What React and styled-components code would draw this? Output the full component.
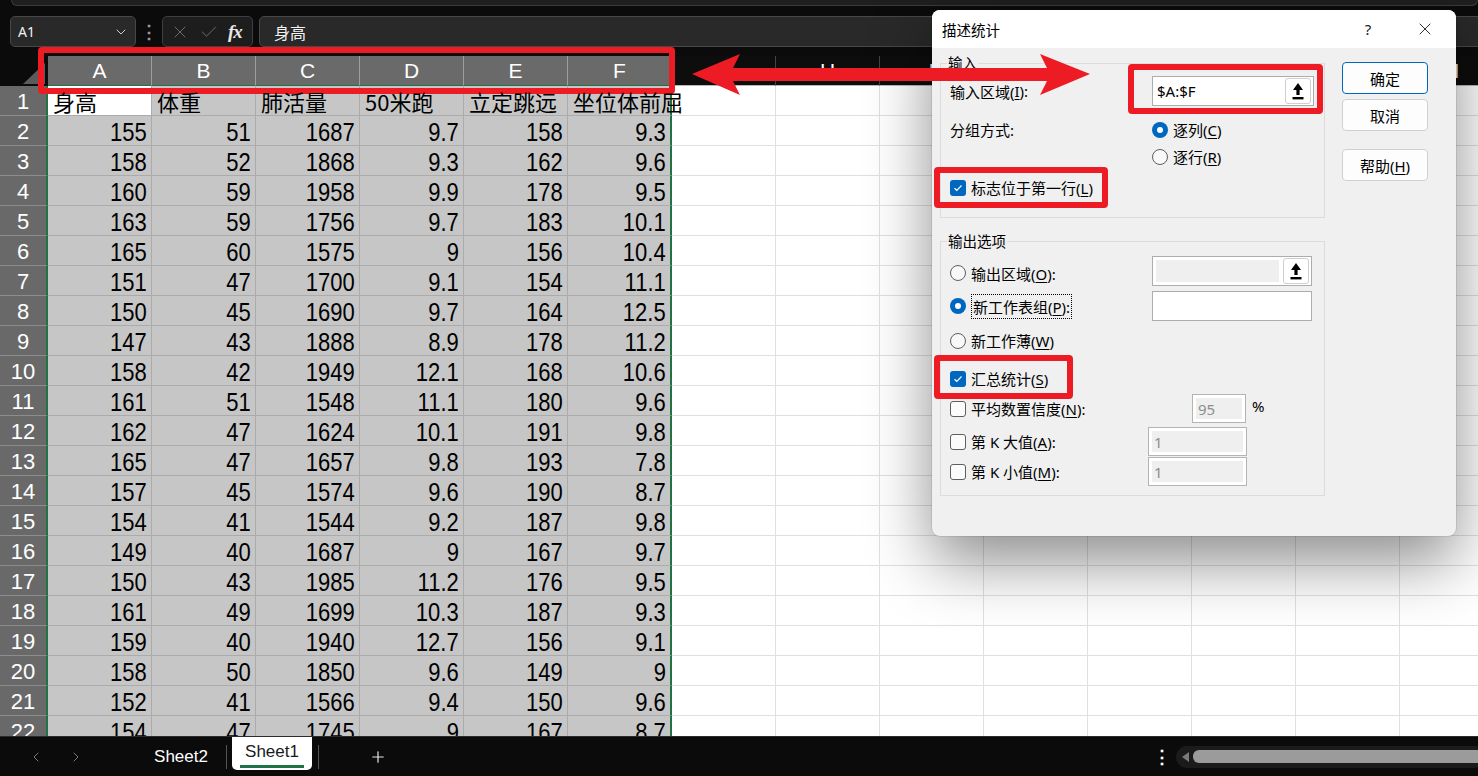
import styled, { createGlobalStyle } from 'styled-components';
import { ChevronDown, ChevronLeft, ChevronRight, X, Check, Plus } from 'lucide-react';

const GlobalStyle = createGlobalStyle`
  html, body { margin: 0; padding: 0; background: #0b0b0b; }
  body { overflow: hidden; }
  * { box-sizing: border-box; }
`;

const HEADERS = ['身高', '体重', '肺活量', '50米跑', '立定跳远', '坐位体前屈'];
const DATA = [
  [155, 51, 1687, 9.7, 158, 9.3],
  [158, 52, 1868, 9.3, 162, 9.6],
  [160, 59, 1958, 9.9, 178, 9.5],
  [163, 59, 1756, 9.7, 183, 10.1],
  [165, 60, 1575, 9, 156, 10.4],
  [151, 47, 1700, 9.1, 154, 11.1],
  [150, 45, 1690, 9.7, 164, 12.5],
  [147, 43, 1888, 8.9, 178, 11.2],
  [158, 42, 1949, 12.1, 168, 10.6],
  [161, 51, 1548, 11.1, 180, 9.6],
  [162, 47, 1624, 10.1, 191, 9.8],
  [165, 47, 1657, 9.8, 193, 7.8],
  [157, 45, 1574, 9.6, 190, 8.7],
  [154, 41, 1544, 9.2, 187, 9.8],
  [149, 40, 1687, 9, 167, 9.7],
  [150, 43, 1985, 11.2, 176, 9.5],
  [161, 49, 1699, 10.3, 187, 9.3],
  [159, 40, 1940, 12.7, 156, 9.1],
  [158, 50, 1850, 9.6, 149, 9],
  [152, 41, 1566, 9.4, 150, 9.6],
  [154, 47, 1745, 9, 167, 8.7],
];
const LETTERS = 'ABCDEFGHIJKLMN'.split('');

function App() {
  return (
    <Screen>
      <GlobalStyle />
      <RibbonEdge />
      <FormulaBar>
        <NameBox>
          <span>A1</span>
          <ChevronDown size={16} strokeWidth={1.5} color="#cfcfcf" />
        </NameBox>
        <BarDots>⋮</BarDots>
        <FxBox>
          <X size={20} strokeWidth={1.2} color="#6c6c6c" />
          <Check size={20} strokeWidth={1.2} color="#6c6c6c" />
          <FxGlyph>fx</FxGlyph>
        </FxBox>
        <FormulaInput>身高</FormulaInput>
      </FormulaBar>

      <Sheet>
        <Corner>
          <svg width="24" height="22" viewBox="0 0 24 22">
            <polygon points="24,0 24,21 2,21" fill="#5b5b5b" />
          </svg>
        </Corner>
        {LETTERS.map((l, i) => (
          <ColHead key={l} $selected={i < 6}>{l}</ColHead>
        ))}

        <RowHead>1</RowHead>
        {LETTERS.map((l, i) => (
          <Cell key={l} $selected={i < 6} $active={i === 0} $edge={i === 5} $align="left">
            {i < 6 && <CjkText $over={i === 5}>{HEADERS[i]}</CjkText>}
          </Cell>
        ))}

        {DATA.map((row, r) => (
          <RowGroup key={r} row={row} n={r + 2} />
        ))}
      </Sheet>

      <BottomBar>
        <NavArrow><ChevronLeft size={16} strokeWidth={1.3} /></NavArrow>
        <NavArrow $gap><ChevronRight size={16} strokeWidth={1.3} /></NavArrow>
        <SheetTab $ml={57}>Sheet2</SheetTab>
        <TabSep $ml={5} />
        <SheetTab $ml={5} $active>Sheet1</SheetTab>
        <TabSep $ml={6} />
        <AddSheet><Plus size={18} strokeWidth={1.6} /></AddSheet>
        <Spacer />
        <BarMenu>⋮</BarMenu>
        <HScroll>
          <ScrollArrow />
          <ScrollThumb />
        </HScroll>
      </BottomBar>

      <Dialog>
        <TitleBar>
          <TitleText>描述统计</TitleText>
          <TitleHelp>?</TitleHelp>
          <TitleClose><X size={20} strokeWidth={1.1} color="#1a1a1a" /></TitleClose>
        </TitleBar>
        <DialogBody>
          <Groups>
            <Group>
              <Legend>输入</Legend>
              <FormRow $mt={5} $h={30}>
                <FieldLabel $w={202}>输入区域(<u>I</u>):</FieldLabel>
                <RangeField $w={162}>
                  <RangeText>$A:$F</RangeText>
                  <PickButton><PickIcon /></PickButton>
                </RangeField>
              </FormRow>
              <FormRow $mt={10} $align="flex-start">
                <FieldLabel $w={202} $h={27}>分组方式:</FieldLabel>
                <ChoiceStack>
                  <Choice $h={27}><Radio $checked /><span>逐列(<u>C</u>)</span></Choice>
                  <Choice $h={27}><Radio /><span>逐行(<u>R</u>)</span></Choice>
                </ChoiceStack>
              </FormRow>
              <FormRow $mt={4} $h={27}>
                <Choice><CheckBox $checked /><span>标志位于第一行(<u>L</u>)</span></Choice>
              </FormRow>
            </Group>

            <Group $mt={15} $pb={9}>
              <Legend>输出选项</Legend>
              <FormRow $mt={7} $h={30}>
                <Choice $w={202} $nudge={4}><Radio /><span>输出区域(<u>O</u>):</span></Choice>
                <RangeField $w={160} $inset>
                  <FieldFill />
                  <PickButton><PickIcon /></PickButton>
                </RangeField>
              </FormRow>
              <FormRow $mt={5} $h={30}>
                <Choice $w={202}><Radio $checked /><FocusText>新工作表组(<u>P</u>):</FocusText></Choice>
                <RangeField $w={160} />
              </FormRow>
              <FormRow $mt={6} $h={27}>
                <Choice><Radio /><span>新工作薄(<u>W</u>)</span></Choice>
              </FormRow>
              <FormRow $mt={11} $h={27}>
                <Choice><CheckBox $checked /><span>汇总统计(<u>S</u>)</span></Choice>
              </FormRow>
              <FormRow $mt={2} $h={29}>
                <Choice $w={242}><CheckBox /><span>平均数置信度(<u>N</u>):</span></Choice>
                <NumberField $w={54}><FieldFill>95</FieldFill></NumberField>
                <Percent>%</Percent>
              </FormRow>
              <FormRow $mt={4} $h={29}>
                <Choice $w={198}><CheckBox /><span>第 K 大值(<u>A</u>):</span></Choice>
                <NumberField $w={99}><FieldFill>1</FieldFill></NumberField>
              </FormRow>
              <FormRow $mt={1} $h={29}>
                <Choice $w={198}><CheckBox /><span>第 K 小值(<u>M</u>):</span></Choice>
                <NumberField $w={99}><FieldFill>1</FieldFill></NumberField>
              </FormRow>
            </Group>
          </Groups>

          <Buttons>
            <DlgButton $primary>确定</DlgButton>
            <DlgButton>取消</DlgButton>
            <DlgButton $mt={13}><span>帮助(<u>H</u>)</span></DlgButton>
          </Buttons>
        </DialogBody>
      </Dialog>

      <Marker $x={38} $y={47} $w={637} $h={47} />
      <Marker $x={1128} $y={64} $w={195} $h={50} />
      <Marker $x={934} $y={167} $w={174} $h={41} />
      <Marker $x={934} $y={355} $w={139} $h={44} />
      <ArrowSvg width="402" height="46" viewBox="690 52 402 46">
        <polygon
          fill="#ed1c24"
          points="692,74 740,54 733,68 1047,68 1040,54 1090,74 1040,95 1047,81 733,81 740,95"
        />
      </ArrowSvg>
    </Screen>
  );
}

function RowGroup({ row, n }) {
  return (
    <>
      <RowHead>{n}</RowHead>
      {LETTERS.map((l, i) => (
        <Cell key={l} $selected={i < 6} $edge={i === 5}>
          {i < 6 && <NumText>{row[i]}</NumText>}
        </Cell>
      ))}
    </>
  );
}

function Radio({ $checked }) {
  return <RadioDot $checked={$checked} />;
}

function CheckBox({ $checked }) {
  return (
    <CheckSquare $checked={$checked}>
      {$checked && (
        <svg width="10" height="8" viewBox="0 0 10 8">
          <polyline points="1.5,4.2 3.8,6.3 8.5,1.5" fill="none" stroke="#fff" strokeWidth="1.2" />
        </svg>
      )}
    </CheckSquare>
  );
}

function PickIcon() {
  return (
    <svg width="12" height="18" viewBox="0 0 12 18">
      <polygon points="6,1 11,8 7.6,8 7.6,13 4.4,13 4.4,8 1,8" fill="#000" />
      <rect x="0.5" y="15" width="11" height="2.4" fill="#000" />
    </svg>
  );
}

const Screen = styled.div`
  position: relative;
  width: 1478px;
  height: 776px;
  overflow: hidden;
  display: flex;
  flex-direction: column;
  background: #0b0b0b;
  font-family: "Liberation Sans", Arial, sans-serif;
`;

const RibbonEdge = styled.div`
  height: 6px;
  margin-left: 11px;
  background: #1f1f1f;
  border: 1px solid #3b3b3b;
  border-top: none;
  border-radius: 0 0 9px 9px;
`;

const FormulaBar = styled.div`
  display: flex;
  align-items: stretch;
  height: 31px;
  margin: 10px 0 9px 0;
  padding-left: 10px;
`;

const NameBox = styled.div`
  width: 126px;
  display: flex;
  align-items: center;
  justify-content: space-between;
  padding: 0 6px 0 7px;
  background: #292929;
  border: 1px solid #474747;
  border-radius: 5px;
  color: #f2f2f2;
  font-family: "Noto Sans", sans-serif;
  font-size: 14px;
`;

const BarDots = styled.div`
  width: 26px;
  display: flex;
  align-items: center;
  justify-content: center;
  color: #9a9a9a;
  font-size: 18px;
  font-weight: bold;
`;

const FxBox = styled.div`
  width: 91px;
  display: flex;
  align-items: center;
  gap: 9px;
  padding-left: 7px;
  background: #1d1d1d;
  border: 1px solid #3f3f3f;
  border-radius: 5px;
`;

const FxGlyph = styled.span`
  color: #e8e8e8;
  font-family: "Liberation Serif", "DejaVu Serif", serif;
  font-style: italic;
  font-size: 19px;
  font-weight: bold;
  letter-spacing: -1px;
`;

const FormulaInput = styled.div`
  flex: 1;
  margin-left: 6px;
  margin-right: -10px;
  display: flex;
  align-items: center;
  padding-left: 14px;
  background: #292929;
  border: 1px solid #474747;
  border-radius: 5px;
  color: #f2f2f2;
  font-family: "Noto Sans CJK SC", sans-serif;
  font-size: 16px;
`;

const Sheet = styled.div`
  flex: 1;
  overflow: hidden;
  display: grid;
  grid-template-columns: 48px repeat(14, 104px);
  grid-auto-rows: 30px;
  background: #fff;
`;

const Corner = styled.div`
  background: #0b0b0b;
  display: flex;
  align-items: flex-end;
  justify-content: flex-end;
  padding-right: 3px;
  border-bottom: 1px solid #0b0b0b;
`;

const ColHead = styled.div`
  display: flex;
  align-items: center;
  justify-content: center;
  font-size: 21px;
  color: #ffffff;
  background: ${p => (p.$selected ? '#6a6a6a' : '#0d0d0d')};
  border-right: 1px solid ${p => (p.$selected ? '#9d9d9d' : '#444')};
  border-bottom: 1px solid ${p => (p.$selected ? '#217346' : '#b8b8b8')};
`;

const RowHead = styled.div`
  display: flex;
  align-items: flex-end;
  justify-content: center;
  padding-bottom: 1px;
  line-height: 25px;
  font-size: 22px;
  color: #fff;
  background: #696969;
  border-bottom: 1px solid #8d8d8d;
  border-right: 2px solid #217346;
`;

const Cell = styled.div`
  display: flex;
  align-items: flex-end;
  justify-content: ${p => (p.$align === 'left' ? 'flex-start' : 'flex-end')};
  padding: 0 4px 0 5px;
  white-space: nowrap;
  color: #000;
  background: ${p => (p.$active ? '#ffffff' : p.$selected ? '#c6c6c6' : '#ffffff')};
  border-right: ${p => (p.$edge ? '2px solid #217346' : `1px solid ${p.$selected ? '#ababab' : '#e0e0e0'}`)};
  border-bottom: 1px solid ${p => (p.$selected ? '#ababab' : '#e0e0e0')};
`;

const CjkText = styled.span`
  position: ${p => (p.$over ? 'relative' : 'static')};
  z-index: 1;
  font-family: "Noto Sans CJK SC", sans-serif;
  font-size: 22px;
  line-height: 27px;
`;

const NumText = styled.span`
  display: inline-block;
  font-size: 25px;
  line-height: 25px;
  transform: scaleX(0.88);
  transform-origin: right bottom;
`;

const BottomBar = styled.div`
  height: 40px;
  flex-shrink: 0;
  display: flex;
  align-items: center;
  padding-left: 28px;
  background: #0b0b0b;
  border-top: 1px solid #2c2c2c;
  color: #fff;
`;

const NavArrow = styled.div`
  width: 16px;
  display: flex;
  justify-content: center;
  color: #8a8a8a;
  margin-left: ${p => (p.$gap ? '24px' : '0')};
`;

const SheetTab = styled.div`
  position: relative;
  width: 80px;
  margin-left: ${p => p.$ml}px;
  align-self: ${p => (p.$active ? 'flex-start' : 'center')};
  height: ${p => (p.$active ? '33px' : 'auto')};
  display: flex;
  align-items: center;
  justify-content: center;
  padding-bottom: ${p => (p.$active ? '4px' : '0')};
  background: ${p => (p.$active ? '#ffffff' : 'transparent')};
  color: ${p => (p.$active ? '#1a1a1a' : '#ffffff')};
  border-radius: 0 0 5px 5px;
  font-size: 17px;
  &::after {
    content: '';
    display: ${p => (p.$active ? 'block' : 'none')};
    position: absolute;
    left: 8px;
    right: 8px;
    bottom: 2px;
    height: 3px;
    background: #217346;
  }
`;

const TabSep = styled.div`
  width: 1px;
  height: 24px;
  margin-left: ${p => p.$ml}px;
  background: #555;
`;

const AddSheet = styled.div`
  margin-left: 50px;
  display: flex;
  color: #e6e6e6;
`;

const Spacer = styled.div`
  flex: 1;
`;

const BarMenu = styled.div`
  width: 6px;
  margin-right: 17px;
  font-size: 18px;
  font-weight: bold;
  color: #fff;
  text-align: center;
`;

const HScroll = styled.div`
  width: 310px;
  height: 22px;
  margin-right: -8px;
  display: flex;
  align-items: center;
  gap: 4px;
  padding-left: 6px;
  background: #1b1b1b;
  border-radius: 11px;
`;

const ScrollArrow = styled.div`
  width: 0;
  height: 0;
  border-top: 5px solid transparent;
  border-bottom: 5px solid transparent;
  border-right: 7px solid #7a7a7a;
`;

const ScrollThumb = styled.div`
  flex: 1;
  height: 13px;
  border-radius: 6px;
  background: #9b9b9b;
`;

const Dialog = styled.div`
  position: absolute;
  left: 932px;
  top: 10px;
  width: 524px;
  height: 526px;
  background: #f0f0f0;
  border-radius: 8px;
  overflow: hidden;
  box-shadow: 0 26px 64px rgba(0, 0, 0, 0.45), 0 0 0 1px rgba(0, 0, 0, 0.08);
  font-family: "Noto Sans", "Noto Sans CJK SC", sans-serif;
  font-size: 15px;
  color: #000;
  u { text-underline-offset: 2px; }
`;

const TitleBar = styled.div`
  height: 38px;
  display: flex;
  align-items: center;
  padding-left: 10px;
  background: #ffffff;
`;

const TitleText = styled.div`
  flex: 1;
  font-size: 14.5px;
`;

const TitleHelp = styled.div`
  width: 24px;
  text-align: center;
  font-size: 15px;
  color: #1a1a1a;
`;

const TitleClose = styled.div`
  width: 24px;
  display: flex;
  justify-content: center;
  margin: 0 19px 0 33px;
`;

const DialogBody = styled.div`
  display: flex;
  gap: 17px;
  padding: 7px 0 0 8px;
`;

const Groups = styled.div`
  width: 385px;
  display: flex;
  flex-direction: column;
`;

const Group = styled.fieldset`
  margin: ${p => p.$mt || 0}px 0 0 0;
  padding: 0 0 ${p => p.$pb ?? 16}px 9px;
  min-width: 0;
  border: 1px solid #dcdcdc;
`;

const Legend = styled.legend`
  margin-left: -3px;
  padding: 0 1px;
  font-size: 14.5px;
  line-height: 16px;
`;

const FormRow = styled.div`
  display: flex;
  align-items: ${p => p.$align || 'center'};
  margin-top: ${p => p.$mt || 0}px;
  height: ${p => (p.$h ? `${p.$h}px` : 'auto')};
  white-space: nowrap;
`;

const FieldLabel = styled.div`
  width: ${p => p.$w}px;
  height: ${p => (p.$h ? `${p.$h}px` : 'auto')};
  display: flex;
  align-items: center;
  flex-shrink: 0;
`;

const ChoiceStack = styled.div`
  display: flex;
  flex-direction: column;
`;

const Choice = styled.label`
  display: flex;
  align-items: center;
  gap: 5px;
  flex-shrink: 0;
  width: ${p => (p.$w ? `${p.$w}px` : 'auto')};
  height: ${p => (p.$h ? `${p.$h}px` : 'auto')};
  padding-top: ${p => p.$nudge || 0}px;
`;

const RadioDot = styled.span`
  width: 16px;
  height: 16px;
  border-radius: 50%;
  flex-shrink: 0;
  background: ${p => (p.$checked ? '#0067c0' : '#f8f8f8')};
  border: ${p => (p.$checked ? 'none' : '1px solid #5e5e5e')};
  display: flex;
  align-items: center;
  justify-content: center;
  &::after {
    content: '';
    display: ${p => (p.$checked ? 'block' : 'none')};
    width: 6px;
    height: 6px;
    border-radius: 50%;
    background: #fff;
  }
`;

const CheckSquare = styled.span`
  width: 16px;
  height: 16px;
  flex-shrink: 0;
  border-radius: 3px;
  display: flex;
  align-items: center;
  justify-content: center;
  background: ${p => (p.$checked ? '#0067c0' : '#fbfbfb')};
  border: ${p => (p.$checked ? 'none' : '1px solid #5e5e5e')};
`;

const FocusText = styled.span`
  padding: 1px 1px;
  border: 1px dotted #000;
`;

const RangeField = styled.div`
  width: ${p => p.$w}px;
  height: 30px;
  display: flex;
  align-items: center;
  padding: ${p => (p.$inset ? '3px 2px 3px 3px' : '0 2px 0 4px')};
  gap: 4px;
  background: #fff;
  border: 1px solid #adadad;
`;

const RangeText = styled.span`
  flex: 1;
  font-size: 15px;
`;

const FieldFill = styled.div`
  flex: 1;
  align-self: stretch;
  display: flex;
  align-items: center;
  padding-left: 2px;
  background: #efefef;
  color: #8d8d8d;
  font-size: 15px;
`;

const PickButton = styled.div`
  width: 26px;
  height: 26px;
  margin-left: auto;
  display: flex;
  align-items: center;
  justify-content: center;
  background: #fff;
  border: 1px solid #cfcfcf;
  border-radius: 3px;
`;

const NumberField = styled.div`
  width: ${p => p.$w}px;
  height: 29px;
  display: flex;
  padding: 3px;
  background: #fff;
  border: 1px solid #b4b4b4;
`;

const Percent = styled.span`
  margin-left: 6px;
  font-size: 15px;
  align-self: flex-start;
  padding-top: 2px;
`;

const Buttons = styled.div`
  width: 86px;
  display: flex;
  flex-direction: column;
  gap: 5px;
  padding-top: 7px;
`;

const DlgButton = styled.div`
  height: 32px;
  margin-top: ${p => p.$mt || 0}px;
  display: flex;
  align-items: center;
  justify-content: center;
  background: #fdfdfd;
  border: 1px solid ${p => (p.$primary ? '#0067c0' : '#d0d0d0')};
  border-radius: 4px;
  font-size: 15px;
`;

const Marker = styled.div`
  position: absolute;
  left: ${p => p.$x}px;
  top: ${p => p.$y}px;
  width: ${p => p.$w}px;
  height: ${p => p.$h}px;
  border: 6px solid #ed1c24;
  border-radius: 4px;
  pointer-events: none;
`;

const ArrowSvg = styled.svg`
  position: absolute;
  left: 690px;
  top: 52px;
`;

export default App;
